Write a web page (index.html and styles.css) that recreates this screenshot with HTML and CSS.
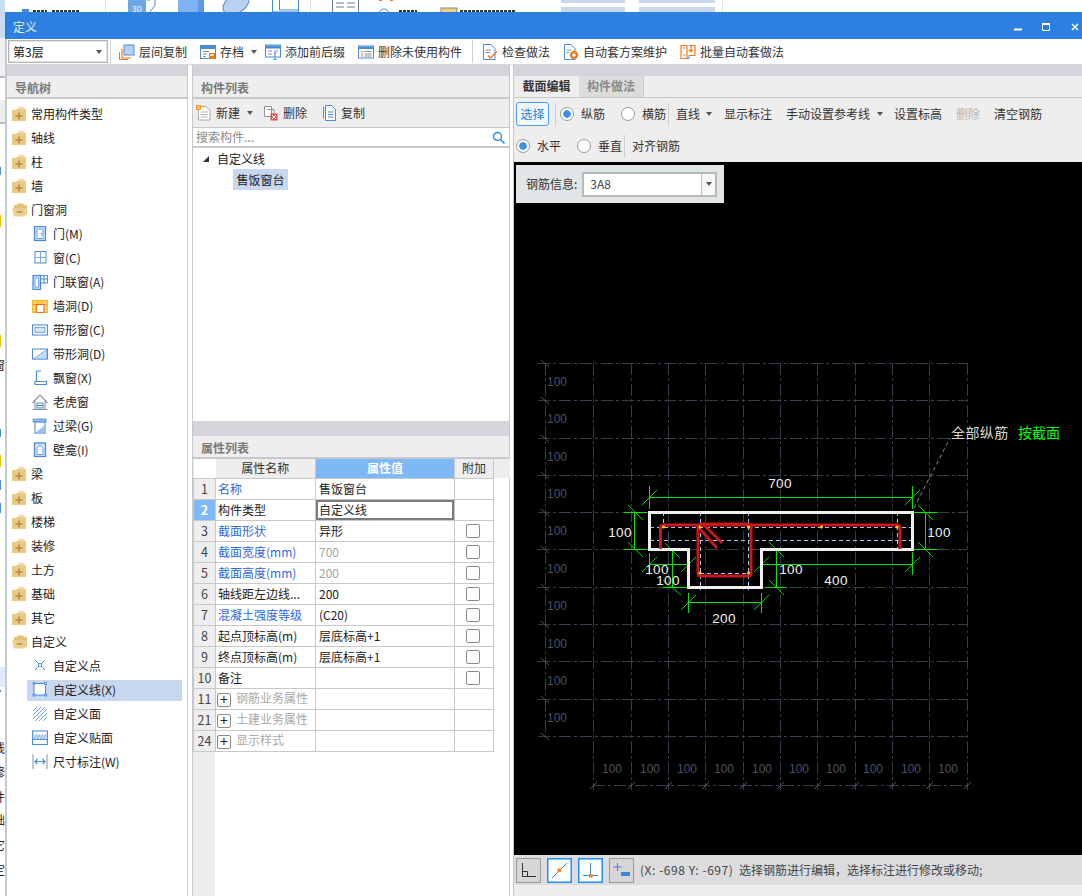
FILE: index.html
```html
<!DOCTYPE html>
<html lang="zh-CN">
<head>
<meta charset="utf-8">
<title>定义</title>
<link rel="stylesheet" href="styles.css">
</head>
<body>
<svg class="defs" aria-hidden="true">
  <symbol id="fplus" viewBox="0 0 15 14"><path fill="#f3dba6" d="M6 0h6l1 3H5z"/><path fill="#edc981" d="M0 3h4l1-1h9v12H0z"/><path fill="#b9975a" d="M6 5.500h2v2.500h2.500v2H8v2.500H6V10H3.500V8H6z"/></symbol>
  <symbol id="fminus" viewBox="0 0 16 14"><path fill="#e2be78" d="M2 2h3l1-2h6l1 2h3v10H2z"/><path fill="#f0d08c" d="M0 5h16l-2 9H2z"/><path fill="#b9975a" d="M5 8h6v2H5z"/></symbol>
  <symbol id="i-door" viewBox="0 0 16 16"><rect x="2.500" y=".5" width="11" height="14" fill="#d7e5f7" stroke="#4a8bd8" stroke-width="1.300"/><rect x="5" y="3" width="6" height="9.500" fill="#fff" stroke="#4a8bd8" stroke-width=".8"/><rect x="9" y="7" width="1" height="2" fill="#4a8bd8"/></symbol>
  <symbol id="i-window" viewBox="0 0 16 16"><rect x="3" y="1.500" width="11" height="11.500" fill="#fff" stroke="#4a8bd8"/><path d="M8.500 1.500v11.500M3 7.500h11" stroke="#7eaae0"/></symbol>
  <symbol id="i-combo" viewBox="0 0 16 16"><rect x="1" y="1.500" width="7.500" height="14" fill="#cfe0f6" stroke="#4a8bd8" stroke-width="1.200"/><rect x="3" y="4" width="3.500" height="9" fill="#fff" stroke="#4a8bd8" stroke-width=".7"/><path d="M8.500 1.500H15.500V9H8.500M12 1.500V9M8.500 5H15.500" fill="none" stroke="#4a8bd8"/></symbol>
  <symbol id="i-hole" viewBox="0 0 16 16"><rect x=".5" y="2.500" width="15" height="12" fill="#ffd166" stroke="#ffb818"/><path d="M.5 6.500H15.500M6 2.500V6.500M10 2.500V6.500" stroke="#f5a623"/><rect x="4.500" y="6.500" width="7.500" height="8" fill="#fff" stroke="#ee6f1f" stroke-width="1.100"/></symbol>
  <symbol id="i-strip" viewBox="0 0 16 16"><rect x=".6" y="3" width="14.800" height="10" fill="#fff" stroke="#4a8bd8" stroke-width="1.100"/><rect x="3" y="5.500" width="10" height="5" fill="#d3e2f6" stroke="#4a8bd8" stroke-width=".7"/></symbol>
  <symbol id="i-striph" viewBox="0 0 16 16"><rect x=".5" y="3" width="15" height="10" fill="#fff" stroke="#4a8bd8"/><path d="M1 13 15 3.500V13z" fill="#c6daf4" stroke="#4a8bd8" stroke-width=".6"/></symbol>
  <symbol id="i-bay" viewBox="0 0 16 16"><path d="M4.500 1v10.500M4.500 1H9M3 11.500h11.500v3H3z" fill="none" stroke="#4a8bd8" stroke-width="1.200"/></symbol>
  <symbol id="i-dormer" viewBox="0 0 16 16"><path d="M.5 9 8 1l7.500 8M3 7.500V15.500H13V7.500M.5 15.500H15.500" fill="none" stroke="#8a8f98" stroke-width="1.100"/><rect x="5" y="9" width="6" height="5" fill="#fff" stroke="#4a8bd8"/><path d="M5 11.500h6" stroke="#4a8bd8"/></symbol>
  <symbol id="i-lintel" viewBox="0 0 16 16"><rect x="1" y="1" width="13" height="3" fill="#9cc0ec" stroke="#4a8bd8" stroke-width=".8"/><rect x="3" y="4" width="10" height="11" fill="#fff" stroke="#4a8bd8" stroke-width="1.100"/><path d="M3.500 14.500 12.500 7.500V14.500z" fill="#9cc0ec"/></symbol>
  <symbol id="i-niche" viewBox="0 0 16 16"><rect x="2.500" y="1" width="11" height="13.500" fill="#d7e5f7" stroke="#4a8bd8" stroke-width="1.300"/><path d="M5 12.500V6l3-3 3 3v6.500z" fill="#fff" stroke="#4a8bd8" stroke-width=".8"/></symbol>
  <symbol id="i-point" viewBox="0 0 16 16"><path d="M3 2 13 12M13 2 3 12" stroke="#4a8bd8"/><rect x="6.500" y="5.500" width="3" height="3" fill="#fff" stroke="#4a8bd8" stroke-width=".8"/></symbol>
  <symbol id="i-line" viewBox="0 0 16 16"><rect x="2" y="1.500" width="11.500" height="11.500" fill="#fff" stroke="#4a8bd8"/><path d="M1 .5h2v2H1zM12.500.5h2v2h-2zM1 12h2v2H1zM12.500 12h2v2h-2z" fill="#fff" stroke="#4a8bd8"/></symbol>
  <symbol id="i-face" viewBox="0 0 16 16"><path d="M1 5 5 1M1 9 9 1M1 13 13 1M3 15 15 3M7 15 15 7M11 15 15 11" stroke="#6ea2e2"/></symbol>
  <symbol id="i-patch" viewBox="0 0 16 16"><rect x=".6" y="1" width="14.800" height="13.500" fill="#fff" stroke="#4a8bd8" stroke-width="1.100"/><path d="M1 4.500H15V9.500H1z" fill="#cddff5"/><path d="M1 9.500H15" stroke="#4a8bd8"/><path d="M2 9.500 5 4.500M5 9.500 8 4.500M8 9.500 11 4.500M11 9.500 14 4.500" stroke="#6ea2e2" stroke-width=".8"/></symbol>
  <symbol id="i-dim" viewBox="0 0 16 16"><path d="M1 0V15M15 0V15" stroke="#8a8f98"/><path d="M3 7.500H13M5.500 5 3 7.500 5.500 10M10.500 5 13 7.500 10.500 10" fill="none" stroke="#4a8bd8" stroke-width="1.200"/></symbol>
</svg>

<svg class="backdrop" viewBox="0 0 1082 896" aria-hidden="true">
  <rect x="0" y="0" width="5" height="38" fill="#c8dcf2"/>
  <rect x="0" y="38" width="5" height="38" fill="#eef0f2"/>
  <rect x="0" y="76" width="5" height="2" fill="#bbb"/>
  <rect x="0" y="100" width="5" height="22" fill="#eee"/>
  <rect x="0" y="122" width="5" height="2" fill="#bbb"/>
  <rect x="0" y="215" width="1" height="12" fill="#ffb400"/>
  <rect x="0" y="335" width="1" height="12" fill="#ffb400"/>
  <rect x="0" y="167" width="1" height="8" fill="#4a90e2"/>
  <rect x="0" y="429" width="1" height="8" fill="#4a90e2"/>
  <rect x="0" y="455" width="1" height="12" fill="#ffb400"/>
  <rect x="0" y="480" width="1" height="10" fill="#4a90e2"/>
  <rect x="0" y="503" width="1" height="10" fill="#4a90e2"/>
  <rect x="0" y="667" width="5" height="20" fill="#deebfa"/>
  <rect x="0" y="690" width="1" height="2" fill="#4a90e2"/>
  <text class="peek" x="-7" y="370">窗</text>
  <text class="peek" x="-7" y="753">线</text>
  <text class="peek" x="-7" y="777">修</text>
  <text class="peek" x="-7" y="802">件</text>
  <text class="peek" x="-7" y="825">础</text>
  <text class="peek" x="-7" y="850">它</text>
  <text class="peek" x="-7" y="875">定</text>
  <rect x="5" y="0" width="17" height="12" fill="#fff"/>
  <rect x="22" y="9" width="7" height="3" fill="#4a8bd8"/>
  <path d="M33 11h14M52 11h28" stroke="#333" stroke-width="2" stroke-dasharray="3 1"/>
  <path d="M105.500 0V12M310.500 0V12M722.500 0V12" stroke="#e2e2e2"/>
  <rect x="128" y="0" width="18" height="12" fill="#6ea6e8"/>
  <path d="M147 0H150M155 0V5L150 12" stroke="#4a8bd8" fill="none"/>
  <text class="peek-3d" x="132" y="12">3D</text>
  <rect x="178" y="0" width="20" height="12" fill="#7fb2ee"/>
  <rect x="198" y="0" width="6" height="12" fill="#5f98de"/>
  <ellipse cx="236" cy="4" rx="14" ry="9" fill="#b9d2f0" stroke="#4a8bd8" transform="rotate(-30 236 4)"/>
  <path d="M272.500 0V12M298.500 0V12M279.500 0V10H298M272 12H298" stroke="#4a8bd8" fill="none"/>
  <path d="M332.500 0V12M358.500 0V12M336 3h8M347 3h8M336 7h8M347 7h8" stroke="#6b7a90" fill="none"/>
  <path d="M379 0H382M390 0H393" stroke="#ee7b1f" stroke-width="2"/>
  <circle cx="384" cy="14" r="5" fill="none" stroke="#4a8bd8"/>
  <path d="M399 11h18M460 11h56" stroke="#333" stroke-width="2" stroke-dasharray="3 1"/>
  <rect x="441" y="8" width="16" height="5" fill="#f3d27d" stroke="#888"/>
  <path d="M561 0H625V3H561zM639 0H715V3H639zM561 7H625V12H561zM639 7H715V12H639z" fill="#c6d8ee"/>
</svg>

<div class="window">
  <header class="title">
    <span>定义</span>
    <div class="winctl">
      <svg class="ctl" width="8" height="8" viewBox="0 0 8 8"><path class="ctl-stroke" d="M0 6.500H8" stroke-width="2"/></svg>
      <svg class="ctl" width="8" height="8" viewBox="0 0 8 8"><path class="ctl-stroke" d="M.5 1.500h7v6h-7z" fill="none"/><path class="ctl-stroke" d="M0 1H8" stroke-width="2"/></svg>
      <svg class="ctl" width="8" height="8" viewBox="0 0 8 8"><path class="ctl-stroke" d="M1 1 7 7M7 1 1 7" stroke-width="1.500"/></svg>
    </div>
  </header>

  <div class="maintool">
    <div class="combo"><span>第3层</span><i class="caret"></i></div>
    <span class="vsep sep-a"></span>
    <div class="tool tool-first">
      <svg width="16" height="16" viewBox="0 0 16 16"><rect x="5" y="1" width="10" height="10" fill="#b5d1f3" stroke="#4a8bd8"/><path d="M3 5V14H12M.5 8V15.500H9" fill="none" stroke="#ee7b1f" stroke-width="1.200"/></svg>
      <span>层间复制</span></div>
    <div class="tool">
      <svg width="16" height="16" viewBox="0 0 16 16"><rect x=".5" y="1.500" width="15" height="13" fill="#fff" stroke="#4a8bd8"/><rect x="1" y="2" width="14" height="3" fill="#4a8bd8"/><path d="M3 7.500H9M3 10H7M3 12.500H6" stroke="#8a8f98"/><rect x="9" y="9" width="6" height="6" fill="#ee7b1f"/><rect x="10.500" y="10" width="3" height="2" fill="#fff"/></svg>
      <span>存档</span><i class="caret caret-tool"></i></div>
    <div class="tool tool-near">
      <svg width="16" height="16" viewBox="0 0 16 16"><rect x=".5" y="1" width="15" height="12" fill="#fff" stroke="#4a8bd8"/><rect x="1" y="1.500" width="14" height="3" fill="#4a8bd8"/><path d="M3 7H7M9 7H13M3 10H7" stroke="#8a8f98"/><path d="M10 9V16M8.500 9H11.500M8.500 15.500H11.500" stroke="#4a8bd8"/></svg>
      <span>添加前后缀</span></div>
    <div class="tool">
      <svg width="16" height="16" viewBox="0 0 16 16"><rect x=".5" y="2" width="15" height="12" fill="#fff" stroke="#4a8bd8"/><rect x="1" y="2.500" width="14" height="2.500" fill="#4a8bd8"/><path d="M3 7.500H5M3 10H5M3 12H5" stroke="#ee7b1f"/><path d="M6.500 7.500H13.500M6.500 10H13.500M6.500 12H13.500" stroke="#8a8f98"/></svg>
      <span>删除未使用构件</span></div>
    <span class="vsep sep-b"></span>
    <div class="tool tool-after-sep">
      <svg width="16" height="16" viewBox="0 0 16 16"><path d="M1.500.5H9L13 4.500V15.500H1.500z" fill="#fff" stroke="#4a8bd8"/><path d="M3.500 6H9M3.500 8.500H8" stroke="#8a8f98"/><path d="M6 11.500 8.500 14 15 7.500" fill="none" stroke="#ee7b1f" stroke-width="1.400"/></svg>
      <span>检查做法</span></div>
    <div class="tool">
      <svg width="16" height="16" viewBox="0 0 16 16"><path d="M1.500.5H8L12 4.500V15.500H1.500z" fill="#fff" stroke="#4a8bd8"/><path d="M3.500 6H8M3.500 8.500H6" stroke="#8a8f98"/><circle cx="11" cy="11" r="3" fill="none" stroke="#ee7b1f" stroke-width="2"/><path d="M11 6.500V15.500M6.500 11H15.500M8 8 14 14M14 8 8 14" stroke="#ee7b1f"/><circle cx="11" cy="11" r="1.500" fill="#fff"/></svg>
      <span>自动套方案维护</span></div>
    <div class="tool">
      <svg width="16" height="16" viewBox="0 0 16 16"><path d="M1 1.500H7V14.500H1zM9 1.500H15V11.500H9" fill="#fff" stroke="#ee7b1f" stroke-width="1.200"/><path d="M3 4H5.500M3 11H5.500" stroke="#ee7b1f"/><path d="M11 2V7M9 5.500 11 8 13 5.500" fill="none" stroke="#ee7b1f" stroke-width="1.200"/><path d="M7 14.500H9V11.500" fill="none" stroke="#4a8bd8"/></svg>
      <span>批量自动套做法</span></div>
  </div>

  <div class="workspace">
    <section class="nav">
      <div class="band"></div>
      <h2 class="head">导航树</h2>
      <ul class="tree">
        <li class="row"><svg class="ficon"><use href="#fplus"/></svg>常用构件类型</li>
        <li class="row"><svg class="ficon"><use href="#fplus"/></svg>轴线</li>
        <li class="row"><svg class="ficon"><use href="#fplus"/></svg>柱</li>
        <li class="row"><svg class="ficon"><use href="#fplus"/></svg>墙</li>
        <li class="row"><svg class="ficon"><use href="#fminus"/></svg>门窗洞</li>
        <li class="row child"><svg class="cicon"><use href="#i-door"/></svg>门(M)</li>
        <li class="row child"><svg class="cicon"><use href="#i-window"/></svg>窗(C)</li>
        <li class="row child"><svg class="cicon"><use href="#i-combo"/></svg>门联窗(A)</li>
        <li class="row child"><svg class="cicon"><use href="#i-hole"/></svg>墙洞(D)</li>
        <li class="row child"><svg class="cicon"><use href="#i-strip"/></svg>带形窗(C)</li>
        <li class="row child"><svg class="cicon"><use href="#i-striph"/></svg>带形洞(D)</li>
        <li class="row child"><svg class="cicon"><use href="#i-bay"/></svg>飘窗(X)</li>
        <li class="row child"><svg class="cicon"><use href="#i-dormer"/></svg>老虎窗</li>
        <li class="row child"><svg class="cicon"><use href="#i-lintel"/></svg>过梁(G)</li>
        <li class="row child"><svg class="cicon"><use href="#i-niche"/></svg>壁龛(I)</li>
        <li class="row"><svg class="ficon"><use href="#fplus"/></svg>梁</li>
        <li class="row"><svg class="ficon"><use href="#fplus"/></svg>板</li>
        <li class="row"><svg class="ficon"><use href="#fplus"/></svg>楼梯</li>
        <li class="row"><svg class="ficon"><use href="#fplus"/></svg>装修</li>
        <li class="row"><svg class="ficon"><use href="#fplus"/></svg>土方</li>
        <li class="row"><svg class="ficon"><use href="#fplus"/></svg>基础</li>
        <li class="row"><svg class="ficon"><use href="#fplus"/></svg>其它</li>
        <li class="row"><svg class="ficon"><use href="#fminus"/></svg>自定义</li>
        <li class="row child"><svg class="cicon"><use href="#i-point"/></svg>自定义点</li>
        <li class="row child selected"><svg class="cicon"><use href="#i-line"/></svg>自定义线(X)</li>
        <li class="row child"><svg class="cicon"><use href="#i-face"/></svg>自定义面</li>
        <li class="row child"><svg class="cicon"><use href="#i-patch"/></svg>自定义贴面</li>
        <li class="row child"><svg class="cicon"><use href="#i-dim"/></svg>尺寸标注(W)</li>
      </ul>
    </section>

    <div class="gutter"></div>

    <section class="middle">
      <div class="band"></div>
      <h2 class="head">构件列表</h2>
      <div class="listtool">
        <svg class="lt-new" width="16" height="16" viewBox="0 0 16 16"><path d="M2.500 1.500H10L14 5.500V15H2.500z" fill="#fff" stroke="#a8a8a8"/><path d="M5 7H12M5 9.500H12M5 12H12" stroke="#b5b5b5"/><rect x="0" y="0" width="5" height="5" fill="#f59b23"/><path d="M1 1 4 4M4 1 1 4" stroke="#fff" stroke-width=".7"/></svg>
        <span class="lt-text">新建</span><i class="caret caret-list"></i>
        <svg class="lt-del" width="14" height="16" viewBox="0 0 14 16"><path d="M.5 1.500H7.500V11.500H.5z" fill="#fff" stroke="#8a8f98"/><path d="M3.500 4.500H10V9" fill="none" stroke="#8a8f98"/><rect x="6.500" y="8.500" width="7" height="7" fill="#e0524f"/><path d="M8 10 12 14M12 10 8 14" stroke="#fff"/></svg>
        <span class="lt-text">删除</span>
        <svg class="lt-copy" width="13" height="16" viewBox="0 0 13 16"><path d="M.5 1.500V13.500" stroke="#4a8bd8" fill="none"/><path d="M2.500.5H8.500L12.500 4.500V15.500H2.500z" fill="#fff" stroke="#4a8bd8"/><path d="M5 7H10.500M5 9.500H10.500M5 12H10.500" stroke="#4a8bd8"/></svg>
        <span class="lt-text">复制</span>
      </div>
      <div class="search">
        <span>搜索构件...</span>
        <svg width="13" height="13" viewBox="0 0 13 13"><circle cx="5.500" cy="5.500" r="4" fill="none" stroke="#2f8fce" stroke-width="1.400"/><path d="M8.500 8.500 12.500 12.500" stroke="#2f8fce" stroke-width="1.600"/></svg>
      </div>
      <div class="parts">
        <div class="part-root"><i class="twist"></i><span>自定义线</span></div>
        <div class="part-leaf">售饭窗台</div>
      </div>
      <div class="band band-tall"></div>
      <h2 class="head">属性列表</h2>
      <div class="propwrap">
        <table class="props">
          <colgroup><col class="c-num"><col class="c-name"><col class="c-val"><col class="c-add"><col class="c-rest"></colgroup>
          <thead>
            <tr><th class="corner"></th><th>属性名称</th><th class="hl">属性值</th><th>附加</th><th class="rest-head"></th></tr>
          </thead>
          <tbody>
            <tr><td class="num">1</td><td class="link name">名称</td><td>售饭窗台</td><td></td></tr>
            <tr><td class="num hl">2</td><td class="name">构件类型</td><td class="current">自定义线</td><td></td></tr>
            <tr><td class="num">3</td><td class="link name">截面形状</td><td>异形</td><td class="chk"><i class="box"></i></td></tr>
            <tr><td class="num">4</td><td class="link name">截面宽度(mm)</td><td class="muted">700</td><td class="chk"><i class="box"></i></td></tr>
            <tr><td class="num">5</td><td class="link name">截面高度(mm)</td><td class="muted">200</td><td class="chk"><i class="box"></i></td></tr>
            <tr><td class="num">6</td><td class="name">轴线距左边线...</td><td>200</td><td class="chk"><i class="box"></i></td></tr>
            <tr><td class="num">7</td><td class="link name">混凝土强度等级</td><td>(C20)</td><td class="chk"><i class="box"></i></td></tr>
            <tr><td class="num">8</td><td class="name">起点顶标高(m)</td><td>层底标高+1</td><td class="chk"><i class="box"></i></td></tr>
            <tr><td class="num">9</td><td class="name">终点顶标高(m)</td><td>层底标高+1</td><td class="chk"><i class="box"></i></td></tr>
            <tr><td class="num">10</td><td class="name">备注</td><td></td><td class="chk"><i class="box"></i></td></tr>
            <tr><td class="num">11</td><td class="group"><i class="plus">+</i>钢筋业务属性</td><td></td><td></td></tr>
            <tr><td class="num">21</td><td class="group"><i class="plus">+</i>土建业务属性</td><td></td><td></td></tr>
            <tr><td class="num">24</td><td class="group"><i class="plus">+</i>显示样式</td><td></td><td></td></tr>
          </tbody>
        </table>
      </div>
    </section>

    <div class="gutter"></div>

    <section class="editor">
      <div class="band"></div>
      <div class="tabs"><span class="tab active">截面编辑</span><span class="tab">构件做法</span></div>
      <div class="editbar">
        <span class="pick">选择</span>
        <span class="vsep ml6"></span>
        <span class="radio on ml4"></span><span class="ml7">纵筋</span>
        <span class="radio ml16"></span><span class="ml7">横筋</span>
        <span class="vsep ml2"></span>
        <span class="ml7">直线</span><i class="caret ml6"></i>
        <span class="ml12">显示标注</span>
        <span class="ml14">手动设置参考线</span><i class="caret ml7"></i>
        <span class="ml11">设置标高</span>
        <span class="ml14 disabled">删除</span>
        <span class="ml14">清空钢筋</span>
      </div>
      <div class="editbar">
        <span class="radio on ml2"></span><span class="ml7">水平</span>
        <span class="radio ml16"></span><span class="ml7">垂直</span>
        <span class="vsep ml2"></span>
        <span class="ml7">对齐钢筋</span>
      </div>
      <div class="canvas">
        <svg class="drawing" viewBox="514 162 568 693">
          <g class="grid">
            <path d="M538 363.500H967M538 400.500H967M538 438.500H967M538 475.500H967M538 512.500H967M538 549.500H967M538 587.500H967M538 624.500H967M538 661.500H967M538 699.500H967M538 736.500H967"/>
            <path d="M545.500 363V736M593.500 363V790M631.500 363V790M668.500 363V790M705.500 363V790M743.500 363V790M780.500 363V790M817.500 363V790M855.500 363V790M892.500 363V790M929.500 363V790M967.500 363V790"/>
            <path d="M593 785.500H967"/>
          </g>
          <path class="gridtick" d="M541 360 549 367M541 397 549 404M541 435 549 442M541 472 549 479M541 509 549 516M541 546 549 553M541 584 549 591M541 621 549 628M541 658 549 665M541 696 549 703M541 733 549 740M590 789 597 782M628 789 635 782M665 789 672 782M702 789 709 782M740 789 747 782M777 789 784 782M814 789 821 782M852 789 859 782M889 789 896 782M926 789 933 782M964 789 971 782"/>
          <g class="gridlabels">
            <text x="547" y="386">100</text><text x="547" y="423">100</text><text x="547" y="461">100</text><text x="547" y="498">100</text><text x="547" y="535">100</text><text x="547" y="573">100</text><text x="547" y="610">100</text><text x="547" y="648">100</text><text x="547" y="685">100</text><text x="547" y="722">100</text>
            <text x="602" y="773">100</text><text x="640" y="773">100</text><text x="677" y="773">100</text><text x="714" y="773">100</text><text x="752" y="773">100</text><text x="789" y="773">100</text><text x="826" y="773">100</text><text x="863" y="773">100</text><text x="901" y="773">100</text><text x="938" y="773">100</text>
          </g>
          <path class="leader" d="M914 508 950 438"/>
          <text class="note" x="951" y="438">全部纵筋</text>
          <text class="note green" x="1018" y="438">按截面</text>
          <path class="ref" d="M650 527.500H912M650 540.500H912M700 573.500H749M663.500 512V527M700.500 512V590M748.500 512V590M897.500 512V549"/>
          <path class="dim" d="M649.500 497.500H912.500M649.500 486V509M912.500 486V509M634.500 512.500V549.500M624 512.500H647M624 549.500H647M925.500 512.500V549.500M914 512.500H937M914 549.500H937M672.500 549.500V587.500M665 549.500H687M662 587.500H687M649.500 564.500H688.500M649.500 553V575M688.500 553V577M776.500 549.500V587.500M765 549.500H787M765 587.500H787M761.500 564.500H912.500M761.500 550V577M912.500 552V575M688.500 602.500H761.500M688.500 593V613M761.500 593V613"/>
          <path class="dimtick" d="M642 505 657 490M905 505 920 490M628 505 643 520M628 542 643 557M918 505 933 520M918 542 933 557M665 543 680 558M663 580 681 595M642 572 657 557M681 572 696 557M769 542 784 557M769 580 784 595M754 572 769 557M905 572 920 557M681 610 696 595M754 610 769 595"/>
          <path class="outline" d="M649.500 512.500H912.500V549.500H761.500V587.500H688.500V549.500H649.500z"/>
          <path class="rebar" d="M660.500 549V528Q660.500 525 663.500 525H897Q900 525 900 528V549"/>
          <path class="rebar" d="M698 527Q698 524 701 524H748Q751 524 751 527V573Q751 576 748 576H701Q698 576 698 573zM698 527 717 548M703 524 722 543"/>
          <g class="nodes">
            <circle cx="663.500" cy="527" r="1.500"/><circle cx="700" cy="527" r="1.500"/><circle cx="748.500" cy="527" r="1.500"/><circle cx="821.500" cy="527" r="1.500"/><circle cx="897" cy="527" r="1.500"/><circle cx="700" cy="573" r="1.500"/><circle cx="748.500" cy="573" r="1.500"/>
          </g>
          <g class="dimlabels">
            <text x="780" y="488">700</text><text x="620" y="537">100</text><text x="939" y="537">100</text><text x="657" y="574">100</text><text x="668" y="585">100</text><text x="791" y="574">100</text><text x="836" y="585">400</text><text x="724" y="623">200</text>
          </g>
        </svg>
        <div class="info">
          <span>钢筋信息:</span>
          <div class="info-combo"><span class="info-val">3A8</span><span class="info-btn"><i class="caret"></i></span></div>
        </div>
      </div>
      <div class="status">
        <span class="sbtn"><svg width="17" height="17" viewBox="0 0 17 17"><path d="M2.500 1V14.500H16M2 9.500H7.500V14" fill="none" stroke="#333"/></svg></span>
        <span class="sbtn active"><svg width="17" height="17" viewBox="0 0 17 17"><path d="M1 16 16 1" stroke="#3a86d8"/><rect x="6.500" y="6.500" width="3.500" height="3.500" fill="#f08a24"/></svg></span>
        <span class="sbtn active"><svg width="17" height="17" viewBox="0 0 17 17"><path d="M8.500 1V15M1 13.500H16" stroke="#3a86d8"/><rect x="7" y="12" width="3.500" height="3.500" fill="#f08a24"/></svg></span>
        <span class="sbtn"><svg width="19" height="17" viewBox="0 0 19 17"><path d="M5.500 1V9M1.500 5H9.500" stroke="#3a86d8"/><rect x="9" y="10" width="9" height="4" fill="#3a86d8"/></svg></span>
        <span class="coords">(X: -698 Y: -697)</span>
        <span class="msg">选择钢筋进行编辑，选择标注进行修改或移动;</span>
      </div>
      <div class="foot"></div>
    </section>
  </div>
</div>
</body>
</html>
```
FILE: styles.css
```css
* { box-sizing: border-box; }
html, body { margin: 0; padding: 0; }
body {
  width: 1082px; height: 896px; overflow: hidden; position: relative;
  background: #fff; color: #2b2b2b;
  font: 12px/16px "Noto Sans CJK SC", "Noto Sans", sans-serif;
}
.defs { display: none; }
.backdrop { position: absolute; left: 0; top: 0; width: 1082px; height: 896px; }
.peek { font-size: 12px; fill: #222; }
.peek-3d { font-size: 8px; fill: #fff; }

.window {
  position: absolute; left: 5px; top: 12px; width: 1077px; height: 884px;
  display: flex; flex-direction: column; background: #fff;
  border-left: 2px solid #c5c9d6;
}
.title {
  height: 27px; margin-left: -2px; padding: 2px 0 0 8px; background: #2d7fe0; color: #e4eefb;
  display: flex; align-items: center; justify-content: space-between; flex: none;
}
.winctl { display: flex; align-items: center; padding-right: 3px; }
.ctl { margin-left: 20px; display: block; }
.ctl:first-child { margin-left: 0; }
.ctl:nth-child(3) { margin-left: 21px; }
.ctl-stroke { stroke: #fff; }

.maintool { height: 26px; flex: none; display: flex; align-items: center; background: #fff; padding-left: 1px; border-bottom: 1px solid #d9d9d9; }
.combo { width: 100px; height: 23px; border: 1px solid #b4b4b4; box-shadow: inset 0 0 0 1px #e4e4e4; display: flex; align-items: center; justify-content: space-between; padding: 0 5px 0 4px; color: #111; }
.caret { display: block; width: 0; height: 0; border: 3px solid transparent; border-top: 4px solid #555; border-bottom: 0; flex: none; }
.vsep { display: block; width: 1px; height: 23px; background: #cfcfcf; flex: none; }
.sep-a { margin-left: 2px; }
.sep-b { margin-left: 10px; }
.tool { display: flex; align-items: center; gap: 4px; margin-left: 13px; color: #333; }
.tool-first { margin-left: 8px; }
.tool-near { margin-left: 8px; }
.tool-after-sep { margin-left: 9px; }
.caret-tool { margin-left: 3px; }

.workspace { flex: 1; min-height: 0; display: grid; grid-template-columns: 181px 4px 318px 3px 569px; }
.gutter { background: #fff; }
.band { height: 11px; background: #d3d5da; flex: none; }
.band-tall { height: 15px; }
.head { margin: 0; height: 23px; padding: 2px 0 0 8px; font-size: 12px; line-height: 19px; font-weight: 700; color: #7a7a7a; background: #eee; border-bottom: 2px solid #c6c8cc; flex: none; }

.nav { display: flex; flex-direction: column; border-right: 1px solid #c9cbd0; }
.tree { list-style: none; margin: 0; padding: 4.500px 0 0; }
.row { height: 21px; margin: 0 5px 3px 5px; display: flex; align-items: center; color: #222; }
.ficon { width: 15px; height: 14px; margin-right: 4px; flex: none; }
.child { margin-left: 20px; padding-left: 5px; }
.cicon { width: 16px; height: 16px; margin-right: 5px; flex: none; }
.selected { background: #c6d7ef; }

.middle { display: flex; flex-direction: column; border-left: 1px solid #c5c7cd; border-right: 1px solid #c5c7cd; }
.listtool { height: 29px; flex: none; background: #eee; border-bottom: 1px solid #c5c7cd; display: flex; align-items: center; color: #333; padding-left: 3px; }
.lt-new { margin-right: 4px; }
.lt-del { margin-left: 11px; margin-right: 5px; }
.lt-copy { margin-left: 16px; margin-right: 5px; }
.caret-list { margin-left: 7px; }
.search { height: 20px; flex: none; border-bottom: 2px solid #c5c8cd; display: flex; align-items: center; justify-content: space-between; padding: 0 4px 0 3px; color: #8a8a8a; }
.parts { height: 273px; flex: none; padding-top: 1px; }
.part-root { height: 20px; display: flex; align-items: center; padding-left: 10px; color: #222; }
.twist { width: 0; height: 0; border-style: solid; border-width: 0 0 6px 6px; border-color: transparent transparent #333 transparent; margin-right: 8px; }
.part-leaf { width: 55px; height: 21px; margin-left: 40px; background: #c6d7ef; color: #222; line-height: 21px; text-align: center; }

.propwrap { flex: 1; background: linear-gradient(90deg, #eee 22px, #fff 22px); }
.props { border-collapse: collapse; table-layout: fixed; width: 316px; }
.c-num { width: 22px; } .c-name { width: 100px; } .c-val { width: 139px; } .c-add { width: 39px; } .c-rest { width: 16px; }
.props th { height: 19px; padding: 0; background: #eee; font-weight: 400; color: #333; border-right: 1px solid #c8c8c8; }
.props th.corner { background: #fff; border-right: 0; }
.props th.rest-head { border-right: 0; }
.props th.hl { background: #7eb8f7; color: #fff; font-weight: 700; }
.props td { height: 21px; padding: 0 0 0 3px; border: 1px solid #c8c8c8; white-space: nowrap; overflow: hidden; color: #222; background: #fff; line-height: 16px; }
.props td.name { padding-left: 2px; }
.props td.num { padding: 0; text-align: center; background: #eee; color: #444; font-size: 12.500px; }
.props td.hl { background: #7eb8f7; color: #fff; font-weight: 700; }
.props td.link { color: #2f68e8; }
.props td.muted { color: #a3a3a3; }
.props td.current { box-shadow: inset 0 0 0 2px #7a7a7a; }
.props td.chk { padding: 0 2px 0 0; }
.box { display: block; width: 14px; height: 14px; margin: 0 auto; border: 1px solid #8b8b8b; border-radius: 2px; background: #fff; }
.props td.group { color: #a8a8a8; padding-left: 1px; }
.plus { display: inline-block; width: 14px; height: 14px; margin-right: 5px; border: 1px solid #8b8b8b; border-radius: 2px; color: #222; font-style: normal; text-align: center; line-height: 11px; font-size: 14px; vertical-align: -2px; }

.editor { display: flex; flex-direction: column; border-left: 1px solid #c5c7cd; }
.tabs { height: 22px; flex: none; display: flex; background: #eee; border-bottom: 1px solid #c5c7cd; }
.tab { width: 65px; height: 21px; background: #dcdcdc; color: #8a8a8a; font-weight: 700; text-align: center; line-height: 20px; border-right: 1px solid #c9c9c9; }
.tab.active { background: #eee; color: #333; border-right: 0; }
.editbar { height: 32px; flex: none; background: #eee; display: flex; align-items: center; color: #333; }
.pick { width: 33px; height: 24px; margin-left: 2px; border: 1px solid #4a9bff; border-radius: 3px; background: #f2f8ff; color: #1a7fe8; text-align: center; line-height: 22px; }
.radio { display: block; width: 14px; height: 14px; border-radius: 50%; border: 1px solid #9a9a9a; background: #fff; flex: none; }
.radio.on { background: radial-gradient(circle, #3f8ff0 0 3.500px, #fff 4px); }
.disabled { color: #b5b5b5; }
.ml2 { margin-left: 2px; } .ml4 { margin-left: 4px; } .ml6 { margin-left: 6px; } .ml7 { margin-left: 7px; }
.ml11 { margin-left: 11px; } .ml12 { margin-left: 12px; } .ml14 { margin-left: 14px; } .ml16 { margin-left: 16px; }

.canvas { flex: none; height: 693px; background: #000; position: relative; }
.drawing { display: block; width: 568px; height: 693px; }
.grid path { fill: none; stroke: #353d4c; stroke-width: 1; stroke-dasharray: 12 3 3 3; shape-rendering: crispEdges; }
.gridtick { fill: none; stroke: #4a5262; stroke-width: 1; }
.gridlabels text { font: 12px "Liberation Sans", sans-serif; fill: #4a5262; }
.leader { stroke: #8a8a8a; stroke-width: 1; stroke-dasharray: 4 3; fill: none; }
.note { font: 14px "Noto Sans CJK SC", sans-serif; letter-spacing: .4px; fill: #d8d8d8; }
.note.green { fill: #00ff00; letter-spacing: 0; }
.ref { fill: none; stroke: #a6c8f0; stroke-width: 1; stroke-dasharray: 4 3; shape-rendering: crispEdges; }
.dim { fill: none; stroke: #00e800; stroke-width: 1; shape-rendering: crispEdges; }
.dimtick { fill: none; stroke: #00d000; stroke-width: 1; }
.outline { fill: none; stroke: #f0f0f0; stroke-width: 3; }
.rebar { fill: none; stroke: #c8171d; stroke-width: 3; }
.nodes circle { fill: #f5d020; }
.dimlabels text { font: 13.500px "Liberation Sans", sans-serif; fill: #f2f2f2; text-anchor: middle; letter-spacing: .3px; }

.info { position: absolute; left: 2px; top: 3px; width: 208px; height: 38px; background: #e0e6e8; display: flex; align-items: center; padding-left: 10px; gap: 5px; color: #333; }
.info-combo { width: 135px; height: 25px; border: 2px solid #b8b8b8; background: #fff; display: flex; align-items: center; justify-content: space-between; }
.info-val { padding-left: 6px; color: #444; }
.info-btn { width: 14px; height: 21px; border-left: 1px solid #bdbdbd; background: #f7f7f7; display: flex; align-items: center; justify-content: center; }

.status { height: 30px; flex: none; background: #dcdcde; display: flex; align-items: center; padding-left: 2px; color: #444; }
.sbtn { width: 25px; height: 25px; margin-right: 6px; border: 1px solid #999; background: #d6d6d8; display: flex; align-items: center; justify-content: center; flex: none; }
.sbtn.active { background: #fff; border: 1px solid #1e90ff; box-shadow: inset 0 0 0 .5px #1e90ff; }
.coords { width: 99px; white-space: nowrap; letter-spacing: .55px; }
.msg { white-space: nowrap; }
.foot { flex: 1; background: #eee; }
```
